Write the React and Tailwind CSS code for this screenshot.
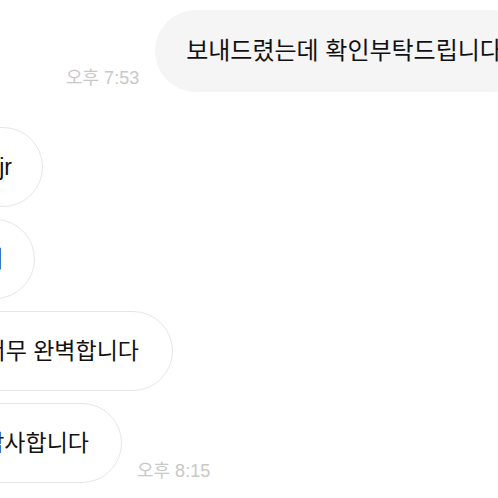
import React from 'react';

const font = { fontFamily: '"Liberation Sans", "Noto Sans CJK KR", sans-serif' };

const LeftBubble = ({ text, width, shift, pad = 32 }) => (
  <div
    className="h-[80px] flex items-center justify-end shrink-0 overflow-hidden whitespace-nowrap rounded-full border border-[#e6e6e6] bg-white text-[23px] text-[#111]"
    style={{ width: `${width}px`, marginLeft: `-${shift}px`, paddingRight: `${pad}px` }}
  >
    {text}
  </div>
);

const App = () => {
  return (
    <div className="w-[498px] h-[498px] overflow-hidden bg-white antialiased" style={font}>
      <div className="flex items-end pt-[10px] pl-[66px]">
        <span className="text-[18px] leading-none text-[#c8c8c8] mb-[5px] shrink-0">오후 7:53</span>
        <div className="ml-[16px] h-[82px] flex items-center shrink-0 whitespace-nowrap rounded-full bg-[#f5f5f5] pl-[31px] pr-[31px] text-[24px] text-[#111]">
          보내드렸는데 확인부탁드립니다
        </div>
      </div>

      <div className="flex flex-col items-start gap-[12px] mt-[35px]">
        <LeftBubble text="감사합니다 wjs gkwjr" width={243} shift={200} pad={30} />
        <LeftBubble text="네네" width={235} shift={200} pad={31} />
        <LeftBubble text="너무 완벽합니다" width={273} shift={100} pad={33} />
        <div className="flex items-end">
          <LeftBubble text="감사합니다" width={222} shift={100} pad={32} />
          <span className="ml-[15px] mb-[3px] text-[18px] leading-none text-[#c8c8c8] shrink-0">오후 8:15</span>
        </div>
      </div>
    </div>
  );
};

export default App;
